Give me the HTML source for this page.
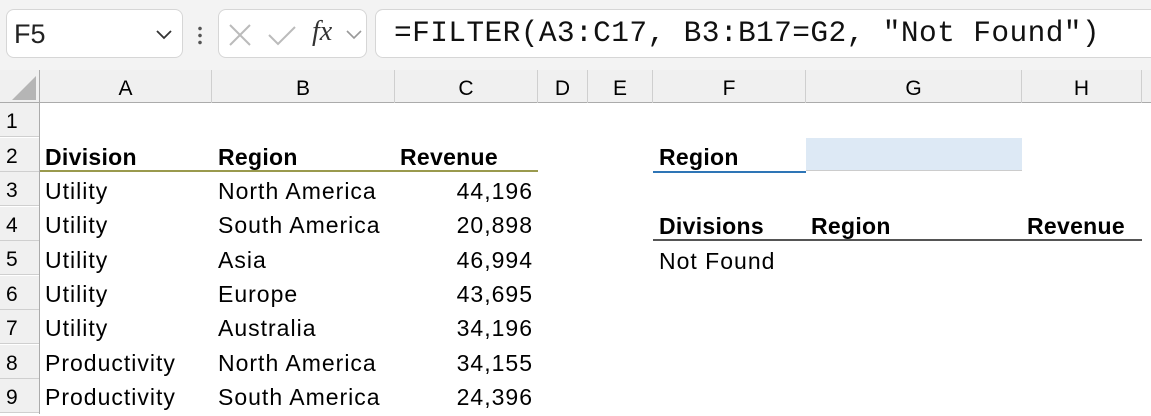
<!DOCTYPE html>
<html><head><style>
*{margin:0;padding:0;box-sizing:border-box}
body{width:1151px;height:414px;overflow:hidden;background:#fff;font-family:"Liberation Sans",sans-serif;position:relative}
.a{position:absolute;white-space:nowrap}
.t{font-size:23px;color:#000;line-height:34px;letter-spacing:1px}
.b{font-weight:bold;letter-spacing:0.3px}
.ch{font-size:21px;color:#000;top:70px;height:33px;line-height:37px;text-align:center;position:absolute;border-right:1px solid #cfcfcf}
.rh{position:absolute;left:0;width:39px;height:34.4px;border-bottom:1px solid #cfcfcf;font-size:21px;line-height:37px;padding-left:6px;background:#f0f0f0}
</style></head><body>
<div class="a" style="left:0;top:0;width:1151px;height:70px;background:#f3f3f3"></div>
<div class="a" style="left:6px;top:9px;width:177px;height:49px;background:#fff;border:1px solid #d6d6d6;border-radius:8px"></div>
<div class="a" style="left:14px;top:19px;font-size:27px;color:#222">F5</div>
<svg class="a" style="left:154px;top:27px" width="20" height="14"><path d="M3 4 L10 11 L17 4" fill="none" stroke="#333" stroke-width="1.8"/></svg>
<div class="a" style="left:198px;top:25px;width:4px;height:20px;background:radial-gradient(circle,#555 1.6px,transparent 2px) 0 0/4px 7px"></div>
<div class="a" style="left:218px;top:9px;width:149px;height:49px;background:#fff;border:1px solid #d6d6d6;border-radius:8px"></div>
<svg class="a" style="left:226px;top:22px" width="30" height="26"><path d="M4 3 L24 23 M24 3 L4 23" stroke="#bbb" stroke-width="2"/></svg>
<svg class="a" style="left:266px;top:22px" width="32" height="26"><path d="M3 13 L12 22 L29 5" fill="none" stroke="#bbb" stroke-width="2"/></svg>
<div class="a" style="left:312px;top:16px;font-family:'Liberation Serif',serif;font-style:italic;font-size:28px;color:#333">fx</div>
<svg class="a" style="left:344px;top:28px" width="20" height="14"><path d="M3 3 L10 10 L17 3" fill="none" stroke="#999" stroke-width="1.6"/></svg>
<div class="a" style="left:375px;top:9px;width:790px;height:49px;background:#fff;border:1px solid #d6d6d6;border-radius:8px"></div>
<div class="a" style="left:394px;top:16px;font-family:'Liberation Mono',monospace;font-size:29.5px;letter-spacing:0.4px;color:#111">=FILTER(A3:C17, B3:B17=G2, "Not Found")</div>
<div class="a" style="left:0;top:70px;width:1151px;height:33px;background:#f0f0f0;border-bottom:1px solid #ababab"></div>
<svg class="a" style="left:10px;top:74px" width="28" height="28"><path d="M26 2 L26 26 L2 26 Z" fill="#b5b5b5"/></svg>
<div class="a" style="left:39px;top:70px;width:1px;height:344px;background:#ababab"></div>
<div class="ch" style="left:40px;width:172px">A</div>
<div class="ch" style="left:212px;width:183px">B</div>
<div class="ch" style="left:395px;width:143px">C</div>
<div class="ch" style="left:538px;width:50px">D</div>
<div class="ch" style="left:588px;width:65px">E</div>
<div class="ch" style="left:653px;width:153px">F</div>
<div class="ch" style="left:806px;width:216px">G</div>
<div class="ch" style="left:1022px;width:120px">H</div>
<div class="rh" style="top:103px">1</div>
<div class="rh" style="top:137.5px">2</div>
<div class="rh" style="top:172px">3</div>
<div class="rh" style="top:206.5px">4</div>
<div class="rh" style="top:241px">5</div>
<div class="rh" style="top:275.5px">6</div>
<div class="rh" style="top:310px">7</div>
<div class="rh" style="top:344.5px">8</div>
<div class="rh" style="top:379px">9</div>
<div class="a" style="left:806px;top:138px;width:216px;height:33px;background:#dde9f5;border-bottom:1px solid #ccc"></div>
<div class="a" style="left:40px;top:170px;width:498px;height:2px;background:#9a9a4e"></div>
<div class="a" style="left:653px;top:171px;width:153px;height:2px;background:#2e75b6"></div>
<div class="a" style="left:653px;top:239px;width:489px;height:2px;background:#555"></div>
<div class="a t b" style="left:45px;top:140px">Division</div>
<div class="a t b" style="left:218px;top:140px">Region</div>
<div class="a t b" style="left:400px;top:140px">Revenue</div>
<div class="a t b" style="left:659px;top:140px">Region</div>
<div class="a t b" style="left:659px;top:209px">Divisions</div>
<div class="a t b" style="left:811px;top:209px">Region</div>
<div class="a t b" style="left:1027px;top:209px">Revenue</div>
<div class="a t" style="left:659px;top:244px">Not Found</div>
<div class="a t" style="left:45px;top:174px">Utility</div><div class="a t" style="left:218px;top:174px">North America</div><div class="a t" style="right:618px;top:174px">44,196</div>
<div class="a t" style="left:45px;top:208px">Utility</div><div class="a t" style="left:218px;top:208px">South America</div><div class="a t" style="right:618px;top:208px">20,898</div>
<div class="a t" style="left:45px;top:243px">Utility</div><div class="a t" style="left:218px;top:243px">Asia</div><div class="a t" style="right:618px;top:243px">46,994</div>
<div class="a t" style="left:45px;top:277px">Utility</div><div class="a t" style="left:218px;top:277px">Europe</div><div class="a t" style="right:618px;top:277px">43,695</div>
<div class="a t" style="left:45px;top:311px">Utility</div><div class="a t" style="left:218px;top:311px">Australia</div><div class="a t" style="right:618px;top:311px">34,196</div>
<div class="a t" style="left:45px;top:346px">Productivity</div><div class="a t" style="left:218px;top:346px">North America</div><div class="a t" style="right:618px;top:346px">34,155</div>
<div class="a t" style="left:45px;top:380px">Productivity</div><div class="a t" style="left:218px;top:380px">South America</div><div class="a t" style="right:618px;top:380px">24,396</div>
</body></html>
